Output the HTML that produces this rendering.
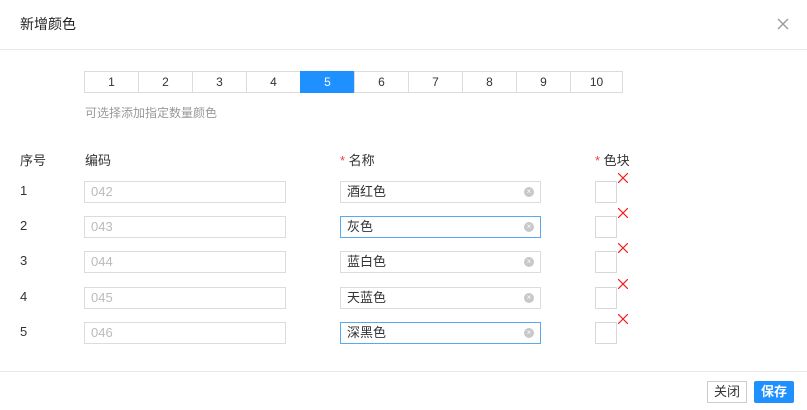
<!DOCTYPE html><html><head><meta charset="utf-8"><style>
body{margin:0;width:807px;height:410px;background:#fff;font-family:"Liberation Sans","Noto Sans CJK SC",sans-serif;position:relative;overflow:hidden;color:#333}
.a{position:absolute}
.t{font-size:14px;color:#222}
.seg{left:84px;top:71px;height:22px;display:flex}
.seg div{width:53px;height:20px;border:1px solid #dcdcdc;margin-left:-1px;text-align:center;font-size:12px;line-height:20px;color:#333}
.seg div.on{background:#1e90ff;border-color:#1e90ff;color:#fff}
.in{height:20px;border:1px solid #dcdcdc;font-size:13px;line-height:20px;padding-left:6px;box-sizing:content-box}
.f{border-color:#5aa8f0}
.c{width:10px;height:10px;border-radius:50%;background:#c8c8c8;right:6px;top:5px;color:#fff;font-size:8px;line-height:10px;text-align:center}
.sw{width:20px;height:20px;border:1px solid #d8d8d8}
.x{width:10px;height:10px}
.h{font-size:13px;color:#333}
.r{color:#f04040}
</style></head><body>
<div class="a t" style="left:20px;top:14px;font-size:14px">新增颜色</div>
<svg class="a" style="left:777px;top:18px" width="12" height="12"><path d="M1 1L11 11M11 1L1 11" stroke="#999" stroke-width="1.3"/></svg>
<div class="a" style="left:0;top:49px;width:807px;height:1px;background:#e8e8e8"></div>
<div class="a seg"><div style="margin-left:0">1</div><div>2</div><div>3</div><div>4</div><div class="on">5</div><div>6</div><div>7</div><div>8</div><div>9</div><div style="width:51px">10</div></div>
<div class="a" style="left:85px;top:104px;font-size:12px;color:#999">可选择添加指定数量颜色</div>
<div class="a h" style="left:20px;top:150px">序号</div>
<div class="a h" style="left:85px;top:150px">编码</div>
<div class="a h" style="left:340px;top:150px"><span class="r">*</span> 名称</div>
<div class="a h" style="left:595px;top:150px"><span class="r">*</span> 色块</div>

<div class="a h" style="left:20px;top:183px">1</div>
<div class="a in" style="left:84px;top:181px;width:194px;color:#bbb">042</div>
<div class="a in" style="left:340px;top:181px;width:193px">酒红色<div class="a c">×</div></div>
<div class="a sw" style="left:595px;top:181px"></div><svg class="a x" style="left:618px;top:173px"><path d="M0 0L10 10M10 0L0 10" stroke="#f02020" stroke-width="1.2"/></svg>

<div class="a h" style="left:20px;top:218px">2</div>
<div class="a in" style="left:84px;top:216px;width:194px;color:#bbb">043</div>
<div class="a in f" style="left:340px;top:216px;width:193px">灰色<div class="a c">×</div></div>
<div class="a sw" style="left:595px;top:216px"></div><svg class="a x" style="left:618px;top:208px"><path d="M0 0L10 10M10 0L0 10" stroke="#f02020" stroke-width="1.2"/></svg>

<div class="a h" style="left:20px;top:253px">3</div>
<div class="a in" style="left:84px;top:251px;width:194px;color:#bbb">044</div>
<div class="a in" style="left:340px;top:251px;width:193px">蓝白色<div class="a c">×</div></div>
<div class="a sw" style="left:595px;top:251px"></div><svg class="a x" style="left:618px;top:243px"><path d="M0 0L10 10M10 0L0 10" stroke="#f02020" stroke-width="1.2"/></svg>

<div class="a h" style="left:20px;top:289px">4</div>
<div class="a in" style="left:84px;top:287px;width:194px;color:#bbb">045</div>
<div class="a in" style="left:340px;top:287px;width:193px">天蓝色<div class="a c">×</div></div>
<div class="a sw" style="left:595px;top:287px"></div><svg class="a x" style="left:618px;top:279px"><path d="M0 0L10 10M10 0L0 10" stroke="#f02020" stroke-width="1.2"/></svg>

<div class="a h" style="left:20px;top:324px">5</div>
<div class="a in" style="left:84px;top:322px;width:194px;color:#bbb">046</div>
<div class="a in f" style="left:340px;top:322px;width:193px">深黑色<div class="a c">×</div></div>
<div class="a sw" style="left:595px;top:322px"></div><svg class="a x" style="left:618px;top:314px"><path d="M0 0L10 10M10 0L0 10" stroke="#f02020" stroke-width="1.2"/></svg>

<div class="a" style="left:0;top:371px;width:807px;height:1px;background:#e8e8e8"></div>
<div class="a" style="left:707px;top:381px;width:38px;height:20px;border:1px solid #ccc;font-size:13px;line-height:20px;text-align:center;color:#333">关闭</div>
<div class="a" style="left:754px;top:381px;width:40px;height:22px;background:#1e90ff;border-radius:2px;font-size:13px;line-height:22px;text-align:center;color:#fff;font-weight:bold">保存</div>
</body></html>
